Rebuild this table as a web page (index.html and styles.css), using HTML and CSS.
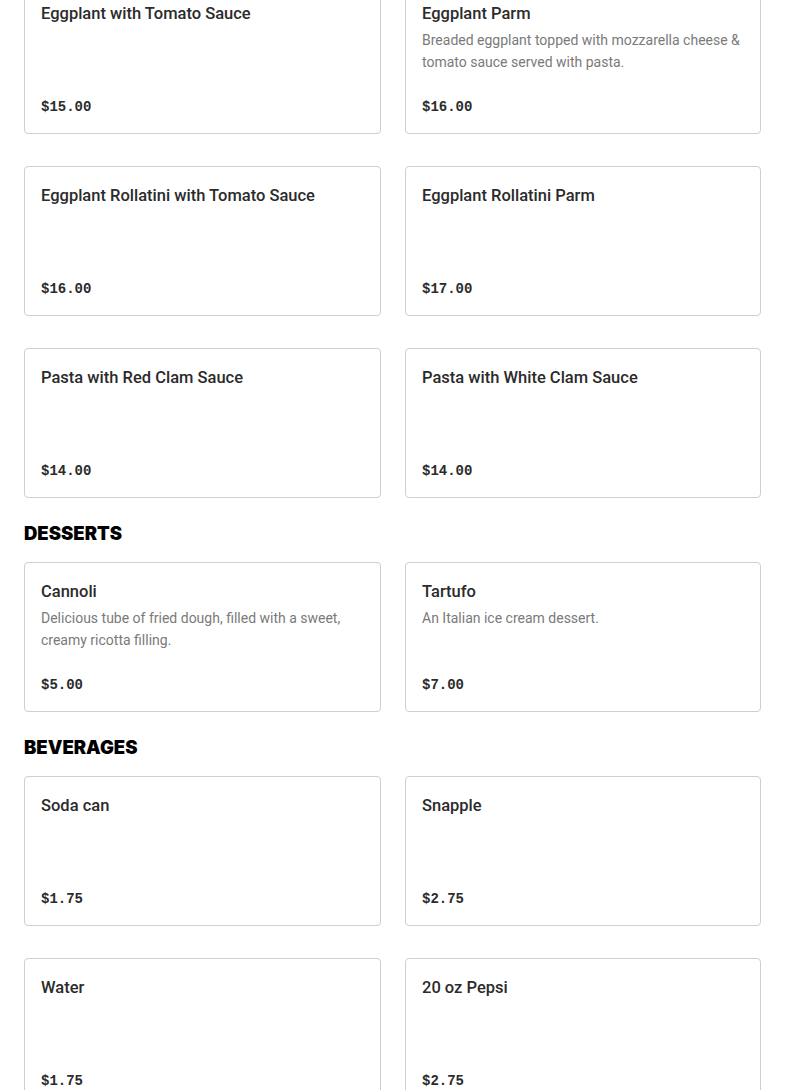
FILE: index.html
```html
<!DOCTYPE html>
<html>
<head>
<meta charset="utf-8">
<link rel="stylesheet" href="styles.css">
</head>
<body>
<main class="menu">
  <section class="section">
    <div class="grid">
      <div class="card"><div class="title">Eggplant with Tomato Sauce</div><div class="price">$15.00</div></div>
      <div class="card"><div class="title">Eggplant Parm</div><div class="desc">Breaded eggplant topped with mozzarella cheese &amp; tomato sauce served with pasta.</div><div class="price">$16.00</div></div>
      <div class="card"><div class="title">Eggplant Rollatini with Tomato Sauce</div><div class="price">$16.00</div></div>
      <div class="card"><div class="title">Eggplant Rollatini Parm</div><div class="price">$17.00</div></div>
      <div class="card"><div class="title">Pasta with Red Clam Sauce</div><div class="price">$14.00</div></div>
      <div class="card"><div class="title">Pasta with White Clam Sauce</div><div class="price">$14.00</div></div>
    </div>
  </section>
  <section class="section">
    <h2 class="heading">DESSERTS</h2>
    <div class="grid">
      <div class="card"><div class="title">Cannoli</div><div class="desc">Delicious tube of fried dough, filled with a sweet, creamy ricotta filling.</div><div class="price">$5.00</div></div>
      <div class="card"><div class="title">Tartufo</div><div class="desc">An Italian ice cream dessert.</div><div class="price">$7.00</div></div>
    </div>
  </section>
  <section class="section">
    <h2 class="heading">BEVERAGES</h2>
    <div class="grid">
      <div class="card"><div class="title">Soda can</div><div class="price">$1.75</div></div>
      <div class="card"><div class="title">Snapple</div><div class="price">$2.75</div></div>
      <div class="card"><div class="title">Water</div><div class="price">$1.75</div></div>
      <div class="card"><div class="title">20 oz Pepsi</div><div class="price">$2.75</div></div>
    </div>
  </section>
</main>
</body>
</html>
```
FILE: styles.css
```css
html, body {
  margin: 0;
  padding: 0;
  background: #fff;
}
body {
  font-family: "Roboto", "Liberation Sans", sans-serif;
  color: #2b2b2b;
}
.menu {
  margin-top: -16px;
  padding: 0 24px;
}
.heading {
  margin: 21px 0 15px;
  font-family: "Inter", "Liberation Sans", sans-serif;
  font-size: 18.5px;
  line-height: 28px;
  font-weight: 900;
  color: #000;
  letter-spacing: 0;
}
.grid {
  display: grid;
  grid-template-columns: 357px 356px;
  column-gap: 24px;
  row-gap: 32px;
}
.card {
  box-sizing: border-box;
  min-height: 150px;
  border: 1px solid #cfcfcf;
  border-radius: 4px;
  padding: 17px 16px 14px;
  display: flex;
  flex-direction: column;
}
.title {
  font-size: 16.5px;
  line-height: 24px;
  font-weight: 500;
  color: #2b2b2b;
  margin-bottom: 3px;
}
.desc {
  font-size: 14px;
  line-height: 22px;
  color: #7a7a7a;
}
.price {
  margin-top: auto;
  font-family: "Liberation Mono", monospace;
  font-weight: 700;
  font-size: 14px;
  line-height: 24px;
  color: #2b2b2b;
}
```
